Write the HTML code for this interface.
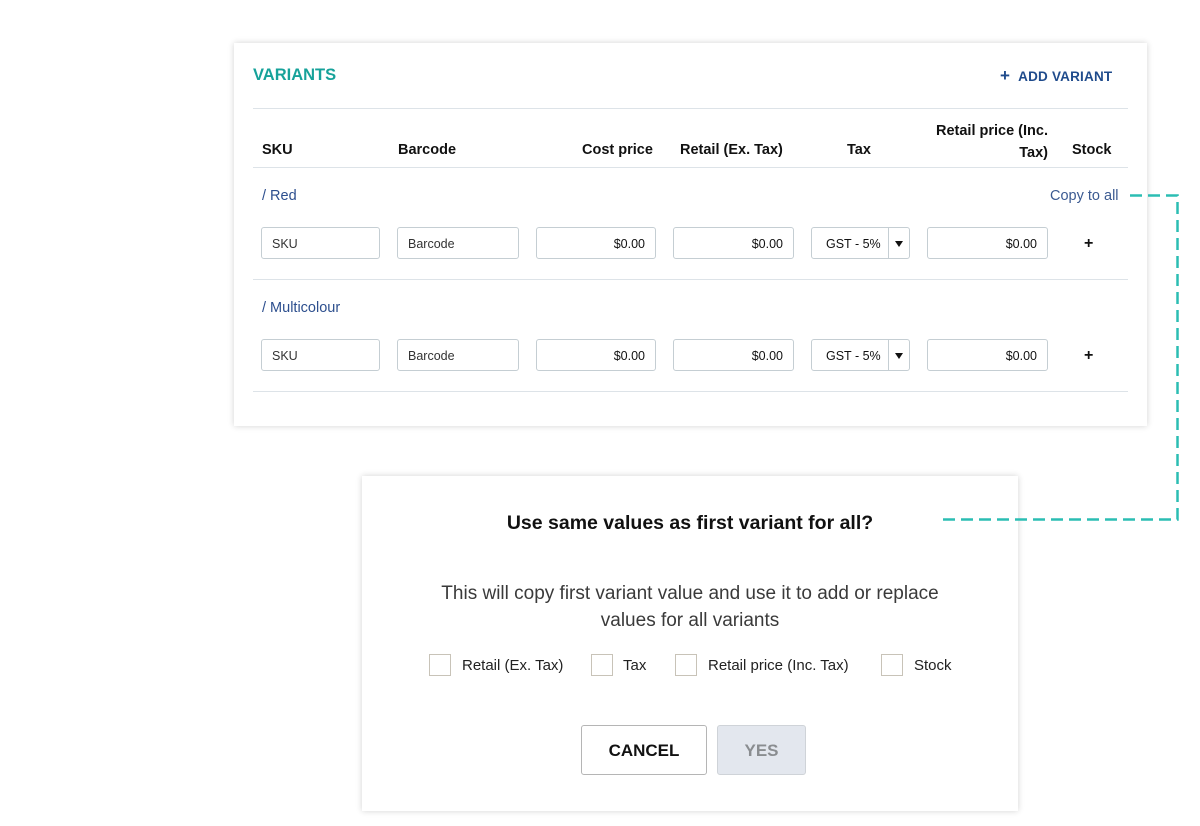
<!DOCTYPE html>
<html><head><meta charset="utf-8"><style>
*{box-sizing:border-box;margin:0;padding:0}
body{width:1200px;height:826px;background:#fff;position:relative;overflow:hidden;font-family:"Liberation Sans",sans-serif;color:#1a1a1a}
.a{position:absolute}
.card{left:234px;top:43px;width:913px;height:383px;background:#fff;box-shadow:0 0 6px rgba(0,0,0,.18)}
.dlg{left:362px;top:476px;width:656px;height:335px;background:#fff;box-shadow:0 0 6px rgba(0,0,0,.18)}
.hr{height:1px;background:#dde3e8;left:253px;width:875px}
.th{font-size:14.5px;font-weight:bold;color:#111}
.in{height:32px;border:1px solid #c5ced3;border-radius:3px;font-size:12.5px;line-height:33px;padding:0 10px;color:#333;background:#fff}
.r{text-align:right;color:#111}
.sel{width:99px;height:32px;border:1px solid #c5ced3;border-radius:3px;font-size:12.5px;line-height:33px;color:#111}
.sel span{position:absolute;left:14px}
.sel i{position:absolute;left:76px;top:0;bottom:0;border-left:1px solid #c5ced3}
.sel b{position:absolute;left:83px;top:13px;border-left:4px solid transparent;border-right:4px solid transparent;border-top:6px solid #111}
.lnk{color:#2d4f8e;font-size:14.5px}
.plus{font-size:16px;font-weight:bold;color:#111}
.cb{width:22px;height:22px;border:1px solid #c8c3b8;background:#fff}
.cl{font-size:15px;color:#222}
</style></head><body>
<div class="a card"></div>
<div class="a" style="left:253px;top:66px;font-size:16.5px;font-weight:bold;color:#16a29a">VARIANTS</div>
<div class="a" style="left:1000px;top:69px;font-size:13.5px;font-weight:bold;color:#1f4b8c;letter-spacing:.2px"><span style="font-size:17px;margin-right:8px;line-height:14px">+</span>ADD VARIANT</div>
<div class="a hr" style="top:108px"></div>
<div class="a th" style="left:262px;top:142px">SKU</div>
<div class="a th" style="left:398px;top:142px">Barcode</div>
<div class="a th" style="left:582px;top:142px">Cost price</div>
<div class="a th" style="left:680px;top:142px">Retail (Ex. Tax)</div>
<div class="a th" style="left:847px;top:142px">Tax</div>
<div class="a th" style="left:900px;top:120px;width:148px;text-align:right;line-height:22px">Retail price (Inc.<br>Tax)</div>
<div class="a th" style="left:1072px;top:142px">Stock</div>
<div class="a hr" style="top:167px"></div>

<div class="a lnk" style="left:262px;top:188px">/ Red</div>
<div class="a lnk" style="left:1050px;top:188px;color:#3b5a91">Copy to all</div>
<div class="a in" style="left:261px;top:227px;width:119px">SKU</div>
<div class="a in" style="left:397px;top:227px;width:122px">Barcode</div>
<div class="a in r" style="left:536px;top:227px;width:120px">$0.00</div>
<div class="a in r" style="left:673px;top:227px;width:121px">$0.00</div>
<div class="a sel" style="left:811px;top:227px"><span>GST - 5%</span><i></i><b></b></div>
<div class="a in r" style="left:927px;top:227px;width:121px">$0.00</div>
<div class="a plus" style="left:1084px;top:235px">+</div>
<div class="a hr" style="top:279px"></div>

<div class="a lnk" style="left:262px;top:300px">/ Multicolour</div>
<div class="a in" style="left:261px;top:339px;width:119px">SKU</div>
<div class="a in" style="left:397px;top:339px;width:122px">Barcode</div>
<div class="a in r" style="left:536px;top:339px;width:120px">$0.00</div>
<div class="a in r" style="left:673px;top:339px;width:121px">$0.00</div>
<div class="a sel" style="left:811px;top:339px"><span>GST - 5%</span><i></i><b></b></div>
<div class="a in r" style="left:927px;top:339px;width:121px">$0.00</div>
<div class="a plus" style="left:1084px;top:347px">+</div>
<div class="a hr" style="top:391px"></div>

<div class="a dlg"></div>
<svg class="a" style="left:0;top:0" width="1200" height="826"><path d="M1130 195.5 H1177.5 V519.5 H943" fill="none" stroke="#2bbdb3" stroke-width="2.5" stroke-dasharray="12 6"/></svg>
<div class="a" style="left:362px;top:512px;width:656px;text-align:center;font-size:19.5px;font-weight:bold;color:#111">Use same values as first variant for all?</div>
<div class="a" style="left:362px;top:580px;width:656px;text-align:center;font-size:19px;line-height:27px;color:#3a3a3a">This will copy first variant value and use it to add or replace<br>values for all variants</div>
<div class="a cb" style="left:429px;top:654px"></div><div class="a cl" style="left:462px;top:657px">Retail (Ex. Tax)</div>
<div class="a cb" style="left:591px;top:654px"></div><div class="a cl" style="left:623px;top:657px">Tax</div>
<div class="a cb" style="left:675px;top:654px"></div><div class="a cl" style="left:708px;top:657px">Retail price (Inc. Tax)</div>
<div class="a cb" style="left:881px;top:654px"></div><div class="a cl" style="left:914px;top:657px">Stock</div>
<div class="a" style="left:581px;top:725px;width:126px;height:50px;border:1px solid #b5b5b5;border-radius:3px;text-align:center;line-height:50px;font-size:17px;font-weight:bold;color:#111">CANCEL</div>
<div class="a" style="left:717px;top:725px;width:89px;height:50px;border:1px solid #cfd3d8;border-radius:3px;background:#e3e7ee;text-align:center;line-height:50px;font-size:17px;font-weight:bold;color:#8a8d90">YES</div>
</body></html>
